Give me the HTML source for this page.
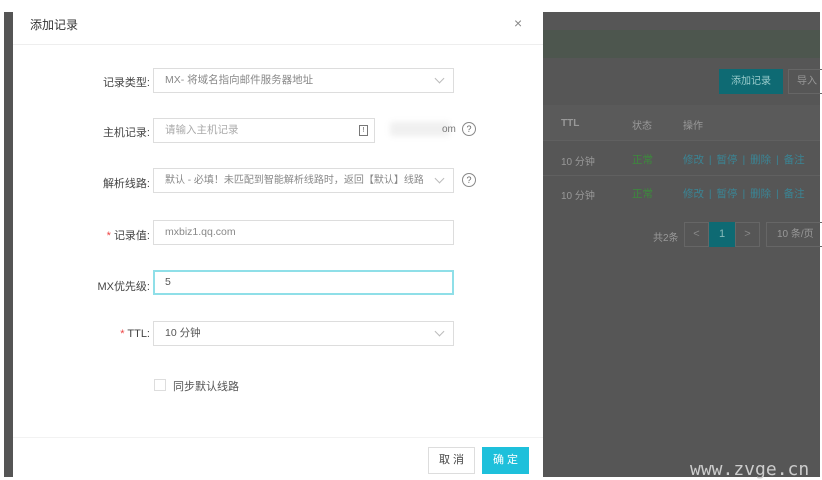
<!DOCTYPE html>
<html><head><meta charset="utf-8"><style>
*{margin:0;padding:0;box-sizing:border-box}
body{width:822px;height:480px;background:#fff;position:relative;overflow:hidden;font-family:"Liberation Sans","Noto Sans CJK SC",sans-serif;font-size:11px;color:#333}
.a{position:absolute}
.lbl{position:absolute;right:672px;width:120px;text-align:right;color:#444;font-size:11px}
.in{position:absolute;left:153px;width:301px;height:25px;border:1px solid #ddd;background:#fff;color:#888;padding-left:11px;line-height:23px;font-size:10.5px;white-space:nowrap;overflow:hidden}
.chev{position:absolute;right:10px;top:6px;width:7px;height:7px;border-right:1px solid #bbb;border-bottom:1px solid #bbb;transform:rotate(45deg)}
.q{position:absolute;width:14px;height:14px;border:1px solid #888;border-radius:50%;font-size:9px;line-height:12px;text-align:center;color:#666}
.dk{color:#999;font-size:10px}
.lk{color:#3a8595;font-size:10.5px;word-spacing:2px}
.gr{color:#3c8a3c;font-size:10.5px}
</style></head><body>
<div class="a" style="left:4px;top:12px;width:9px;height:465px;background:#555"></div>
<div class="a" style="left:543px;top:12px;width:277px;height:465px;background:#565656"></div>
<div class="a" style="left:543px;top:30px;width:277px;height:28px;background:#4d564e"></div>
<div class="a" style="left:719px;top:69px;width:64px;height:25px;background:#0e6a73;color:#9cc;text-align:center;line-height:25px;font-size:10px">添加记录</div>
<div class="a" style="left:788px;top:69px;width:40px;height:25px;border:1px solid #666;color:#999;line-height:23px;padding-left:8px;font-size:10px">导入</div>
<div class="a" style="left:543px;top:105px;width:277px;height:35px;background:#5a5a5a"></div>
<div class="a dk" style="left:561px;top:118px;font-weight:bold">TTL</div>
<div class="a dk" style="left:632px;top:117px">状态</div>
<div class="a dk" style="left:683px;top:117px">操作</div>
<div class="a" style="left:543px;top:140px;width:277px;height:1px;background:#606060"></div>
<div class="a dk" style="left:561px;top:153px">10 分钟</div><div class="a gr" style="left:632px;top:152px">正常</div>
<div class="a lk" style="left:683px;top:152px">修改 | 暂停 | 删除 | 备注</div>
<div class="a" style="left:543px;top:175px;width:277px;height:1px;background:#606060"></div>
<div class="a dk" style="left:561px;top:187px">10 分钟</div><div class="a gr" style="left:632px;top:186px">正常</div>
<div class="a lk" style="left:683px;top:186px">修改 | 暂停 | 删除 | 备注</div>
<div class="a dk" style="left:653px;top:229px">共2条</div>
<div class="a" style="left:684px;top:222px;width:25px;height:25px;border:1px solid #666;color:#888;text-align:center;line-height:23px">&lt;</div>
<div class="a" style="left:709px;top:222px;width:26px;height:25px;background:#0e6a73;color:#8bb;text-align:center;line-height:25px">1</div>
<div class="a" style="left:735px;top:222px;width:25px;height:25px;border:1px solid #666;color:#888;text-align:center;line-height:23px">&gt;</div>
<div class="a dk" style="left:766px;top:222px;width:60px;height:25px;border:1px solid #666;line-height:23px;padding-left:10px">10 条/页</div>

<div class="a" style="left:13px;top:12px;width:530px;height:465px;background:#fff"></div>
<div class="a" style="left:13px;top:44px;width:530px;height:1px;background:#eee"></div>
<div class="a" style="left:30px;top:16px;font-size:12px;color:#333">添加记录</div>
<div class="a" style="left:514px;top:15px;font-size:14px;color:#888">×</div>

<div class="lbl" style="top:74px">记录类型:</div>
<div class="in" style="top:68px">MX- 将域名指向邮件服务器地址<div class="chev"></div></div>
<div class="lbl" style="top:124px">主机记录:</div>
<div class="in" style="top:118px;width:222px;color:#aaa">请输入主机记录<div class="a" style="right:6px;top:6px;width:9px;height:11px;border:1px solid #777;font-size:7px;line-height:9px;text-align:center;color:#555">!</div></div>
<div class="a" style="left:390px;top:122px;width:60px;height:14px;background:#f0f0f0;filter:blur(3px)"></div>
<div class="a" style="left:442px;top:124px;color:#777;font-size:10px">om</div>
<div class="q" style="left:462px;top:122px">?</div>
<div class="lbl" style="top:175px">解析线路:</div>
<div class="in" style="top:168px;color:#888;font-size:10px;padding-right:30px">默认 - 必填！未匹配到智能解析线路时，返回【默认】线路...<div class="a" style="right:0;top:0;width:30px;height:23px;background:#fff"></div><div class="chev"></div></div>
<div class="q" style="left:462px;top:173px">?</div>
<div class="lbl" style="top:227px"><span style="color:#e44">* </span>记录值:</div>
<div class="in" style="top:220px">mxbiz1.qq.com</div>
<div class="lbl" style="top:278px">MX优先级:</div>
<div class="in" style="top:270px;border:2px solid #8fdfe8;color:#555;padding-left:10px;line-height:21px">5</div>
<div class="lbl" style="top:328px"><span style="color:#e44">* </span>TTL:</div>
<div class="in" style="top:321px;color:#555">10 分钟<div class="chev"></div></div>
<div class="a" style="left:154px;top:379px;width:12px;height:12px;border:1px solid #ddd"></div>
<div class="a" style="left:173px;top:378px;color:#555">同步默认线路</div>
<div class="a" style="left:13px;top:437px;width:530px;height:1px;background:#f2f2f2"></div>
<div class="a" style="left:428px;top:447px;width:47px;height:27px;border:1px solid #ddd;text-align:center;line-height:25px;color:#444">取 消</div>
<div class="a" style="left:482px;top:447px;width:47px;height:27px;background:#1ec0db;text-align:center;line-height:27px;color:#fff">确 定</div>
<div class="a" style="left:690px;top:459px;font-family:'DejaVu Sans Mono',monospace;font-size:18px;color:#ccc;letter-spacing:0px">www.zvge.cn</div>
</body></html>
